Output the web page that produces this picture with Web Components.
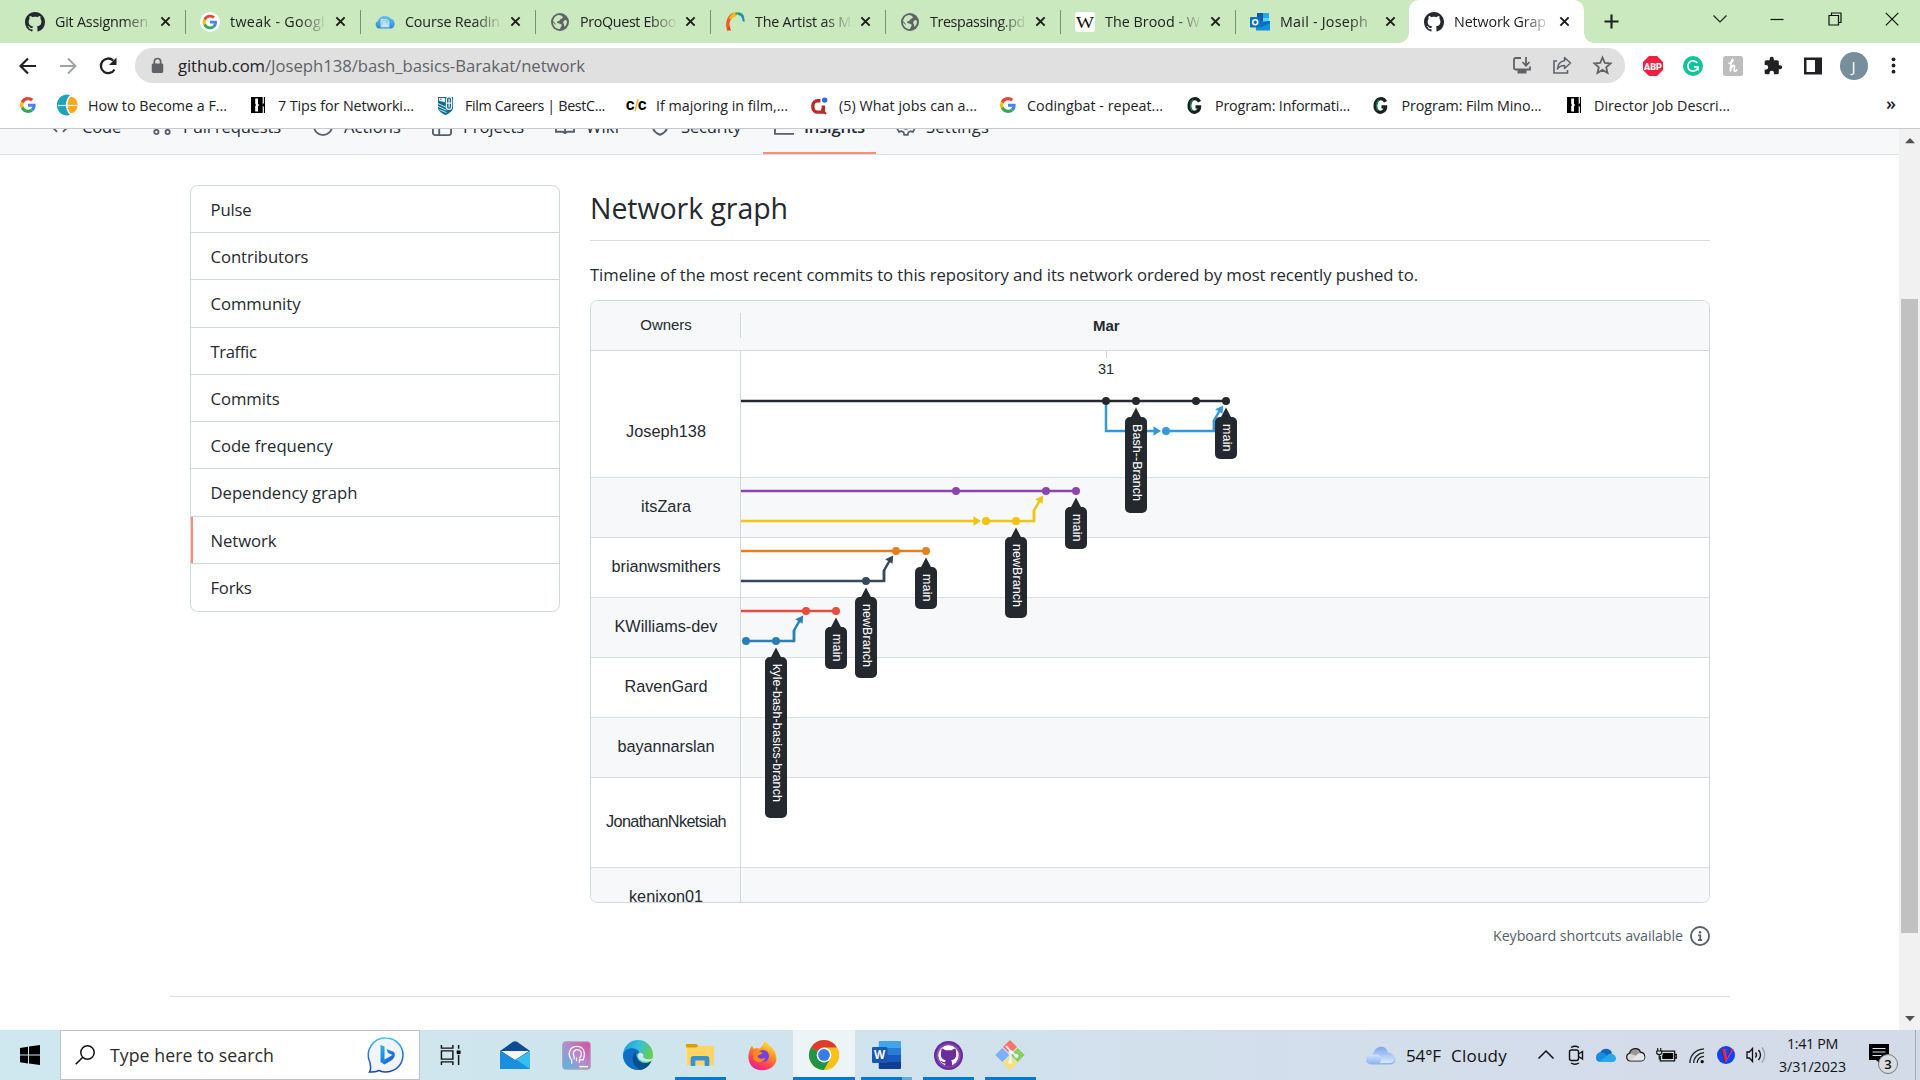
<!DOCTYPE html>
<html lang="en">
<head>
<meta charset="utf-8">
<title>Network Graph</title>
<style>
html,body{margin:0;height:100%;overflow:hidden;background:#fff}
body{font-family:"Open Sans","Noto Sans",sans-serif;color:#24292f}
</style>
</head>
<body>
<desktop-screen></desktop-screen>
<script>
const GH='M8 0c4.42 0 8 3.58 8 8a8.013 8.013 0 0 1-5.45 7.59c-.4.08-.55-.17-.55-.38 0-.27.01-1.13.01-2.2 0-.75-.25-1.23-.54-1.48 1.78-.2 3.65-.88 3.65-3.95 0-.88-.31-1.59-.82-2.15.08-.2.36-1.02-.08-2.12 0 0-.67-.22-2.2.82-.64-.18-1.32-.27-2-.27-.68 0-1.36.09-2 .27-1.53-1.03-2.2-.82-2.2-.82-.44 1.1-.16 1.92-.08 2.12-.51.56-.82 1.28-.82 2.15 0 3.06 1.86 3.75 3.64 3.95-.23.2-.44.55-.51 1.07-.46.21-1.61.55-2.33-.66-.15-.24-.6-.83-1.23-.82-.67.01-.27.38.01.53.34.19.73.9.82 1.13.16.45.68 1.31 2.69.94 0 .67.01 1.3.01 1.49 0 .21-.15.45-.55.38A7.995 7.995 0 0 1 0 8c0-4.42 3.58-8 8-8Z';
const G='<path fill="#ea4335" d="M24 9.5c3.54 0 6.71 1.22 9.21 3.6l6.85-6.85C35.9 2.38 30.47 0 24 0 14.62 0 6.51 5.38 2.56 13.22l7.98 6.19C12.43 13.72 17.74 9.5 24 9.5z"/><path fill="#4285f4" d="M46.98 24.55c0-1.57-.15-3.09-.38-4.55H24v9.02h12.94c-.58 2.96-2.26 5.48-4.78 7.18l7.73 6c4.51-4.18 7.09-10.36 7.09-17.65z"/><path fill="#fbbc05" d="M10.53 28.59c-.48-1.45-.76-2.99-.76-4.59s.27-3.14.76-4.59l-7.98-6.19C.92 16.46 0 20.12 0 24c0 3.88.92 7.54 2.56 10.78l7.97-6.19z"/><path fill="#34a853" d="M24 48c6.48 0 11.93-2.13 15.89-5.81l-7.73-6c-2.15 1.45-4.92 2.3-8.16 2.3-6.26 0-11.57-4.22-13.47-9.91l-7.98 6.19C6.51 42.62 14.62 48 24 48z"/>';
/* name: [viewBox, markup] */
const ICONS={
github:['0 0 16 16',`<path fill="#24292f" d="${GH}"/>`],
google:['0 0 48 48',G],
googleTab:['0 0 20 20',`<circle cx="10" cy="10" r="10" fill="#fff"/><g transform="translate(2.700 2.700) scale(.304)">${G}</g>`],
cloudDoc:['0 0 20 20','<defs><linearGradient id="a" x2="0" y2="1"><stop stop-color="#69c3f2"/><stop offset="1" stop-color="#2d8bd0"/></linearGradient></defs><path fill="url(#a)" d="M4 16.500a4 4 0 0 1-1.200-7.500A7.500 7.500 0 0 1 15.500 6.500 5.300 5.300 0 0 1 16.500 16.500Z"/><path d="M6 7.500h5.500l2.500 2v5.500H6z" fill="#8fd0f2" stroke="#e4f5ff" stroke-width=".7"/><path d="M7.500 9.800h3M7.500 12h5M7.500 13.500h5" stroke="#fff" stroke-width=".8"/>'],
globe:['0 0 20 20','<circle cx="10" cy="10" r="9" fill="#5f6368"/><path fill="#cbe9be" d="M9 3c2 .2 3.500 1 4 2.300-.8 1.600-2.300 1.200-3 2.600-.6 1.400-3 .8-3 2.500 1.200 1.500 3.500.6 4.500 2.200.7 1.400-.9 2.500-1.500 4.400C5.800 17 3 14 3 10.200c1.200.8 1.500 2.300 3 2.600-.6-2.200-2.500-2.600-3-4C4 5.200 6 3.200 9 3zM15 8c1.200-.4 1.600.4 2 1.800-.2 2.200-1 3.800-2.400 5-.8-1.300-.2-2.300-1.200-3.300-.6-1.400.3-2.800 1.600-3.500z"/>'],
arc:['0 0 20 20','<path d="M4 18.500C1 11 4 3.500 10 2.300" fill="none" stroke="#f15b2a" stroke-width="3.500"/><path d="M2.500 16.500l3.600 2.500c-.9-2-1.400-3.500-1.500-5z" fill="#e4312b"/><path d="M5.300 7C6.800 3.700 9 2.500 11.500 2.200" fill="none" stroke="#fbb615" stroke-width="3.300"/><path d="M10.500 1.600c4-.8 7 .8 7.800 4" fill="none" stroke="#35b34a" stroke-width="2.200"/><path d="M13 2c3.500.3 5.500 3 5.700 7.500" fill="none" stroke="#2486d6" stroke-width="2.200"/>'],
wiki:['0 0 20 20','<rect width="20" height="20" rx="3" fill="#fff"/><text x="10" y="16" text-anchor="middle" font-family="Liberation Serif,serif" font-size="17" textLength="18" lengthAdjust="spacingAndGlyphs" fill="#111">W</text>'],
outlook:['0 0 20 20','<path fill="#0f5aa8" d="M7 1h12v9H7z"/><path fill="#28a8ea" d="M13 1h6v5h-6z"/><path fill="#50d9ff" d="M13 6h6v4h-6z"/><path fill="#1490df" d="M6 10l14-1v9.500H6z"/><path fill="#0f6cbd" d="M20 9v2l-8 4-6-4z"/><rect y="5" width="10.500" height="10.500" rx="1" fill="#0a6fcb"/><circle cx="5.200" cy="10.200" r="2.500" fill="none" stroke="#fff" stroke-width="1.500"/>'],
close:['0 0 12 12','<path d="M1.500 1.500l9 9M10.500 1.500l-9 9" stroke="#1b1b1b" stroke-width="2.100"/>'],
plus:['0 0 16 16','<path d="M8 .5v15M.5 8h15" stroke="#202124" stroke-width="2.300"/>'],
chev:['0 0 16 16','<path d="M1.500 4.500L8 11l6.500-6.500" fill="none" stroke="#222" stroke-width="1.200"/>'],
min:['0 0 16 16','<path d="M1.500 8.500h13" stroke="#111" stroke-width="1.200"/>'],
restore:['0 0 16 16','<path d="M2 4.500h9.500V14H2zM4.500 4V2h9.500v9.500h-2" fill="none" stroke="#111" stroke-width="1.200"/>'],
winclose:['0 0 16 16','<path d="M1.800 1.800l12.500 12.500M14.300 1.800L1.800 14.300" stroke="#111" stroke-width="1.200"/>'],
back:['0 0 20 20','<path d="M18 10H3M10 2.500L2.500 10l7.500 7.500" fill="none" stroke="#202124" stroke-width="2.200"/>'],
fwd:['0 0 20 20','<path d="M2 10h15M10 2.500l7.500 7.500-7.500 7.500" fill="none" stroke="#a0a3a6" stroke-width="2"/>'],
reload:['0 0 20 20','<path d="M16.500 13.500a7.300 7.300 0 1 1-1.300-9" fill="none" stroke="#202124" stroke-width="2.300"/><path fill="#202124" d="M18.500 1.500v7.500h-7.500z"/>'],
lock:['0 0 12 16','<path fill="#5f6368" d="M2 6h8a1.300 1.300 0 0 1 1.300 1.300v6.400A1.300 1.300 0 0 1 10 15H2a1.300 1.300 0 0 1-1.300-1.300V7.300A1.300 1.300 0 0 1 2 6z"/><path d="M3.100 6.500V4.300a2.900 2.900 0 0 1 5.800 0v2.200" fill="none" stroke="#5f6368" stroke-width="1.600"/>'],
install:['0 0 20 20','<path d="M9 3H3.500a1.500 1.500 0 0 0-1.500 1.500v8.500a1.500 1.500 0 0 0 1.500 1.500H18v-3" fill="none" stroke="#5f6368" stroke-width="1.800"/><path d="M14 2v8M10.500 7l3.500 3.700L17.500 7" fill="none" stroke="#5f6368" stroke-width="1.800"/><path fill="#5f6368" d="M5.500 15h9v3.500h-9z"/>'],
share:['0 0 20 20','<path d="M5 6H2v12h13.500v-3" fill="none" stroke="#5f6368" stroke-width="1.600"/><path d="M12.500 2.500L18.500 8l-6 5.500V10.500C9 10.500 7 11.500 5.500 14c.2-4.500 2.500-7.600 7-8.200z" fill="none" stroke="#5f6368" stroke-width="1.500" stroke-linejoin="round"/>'],
star:['0 0 20 20','<path d="M10 2.500l2.200 5.100 5.500.5-4.200 3.600 1.300 5.400L10 14.200l-4.800 2.900 1.300-5.400L2.300 8.100l5.500-.5z" fill="none" stroke="#5f6368" stroke-width="1.700"/>'],
abp:['0 0 20 20','<path fill="#ef1f3f" d="M6 0h8l6 6v8l-6 6H6l-6-6V6z"/><text x="10" y="13.500" text-anchor="middle" font-family="Roboto,sans-serif" font-weight="900" font-size="9.500" textLength="18" lengthAdjust="spacingAndGlyphs" fill="#fff">ABP</text>'],
grammarly:['0 0 20 20','<circle cx="10" cy="10" r="10" fill="#15c39a"/><path d="M14.300 7A5.200 5.200 0 1 0 15 11.500M11 11h4.200v3.500" fill="none" stroke="#fff" stroke-width="1.700"/>'],
honey:['0 0 20 20','<rect width="20" height="20" rx="2.500" fill="#bdbdbd"/><path d="M5.500 7.500C8 7 10.500 5 10 3.700 9 2.500 8 6 7.200 15.500 8 11 10.300 8.500 11.300 9.500c1 1-1 4.500 0 5.500.8.700 2-.3 2.800-1.500" fill="none" stroke="#fff" stroke-width="1.700"/>'],
puzzle:['0 0 24 24','<path fill="#202124" d="M20.500 11H19V7a2 2 0 0 0-2-2h-4V3.500a2.500 2.500 0 0 0-5 0V5H4a2 2 0 0 0-2 2v3.800h1.500a2.700 2.700 0 0 1 0 5.400H2V20a2 2 0 0 0 2 2h3.800v-1.500a2.700 2.700 0 0 1 5.400 0V22H17a2 2 0 0 0 2-2v-4h1.500a2.500 2.500 0 0 0 0-5z"/>'],
panel:['0 0 20 20','<path fill="#202124" fill-rule="evenodd" d="M1 1.500h18v17H1zM3.500 4v12h8.500V4z"/>'],
dots:['0 0 20 20','<g fill="#202124"><circle cx="10" cy="3.500" r="2"/><circle cx="10" cy="10" r="2"/><circle cx="10" cy="16.500" r="2"/></g>'],
bmGlobe:['0 0 21 20','<path d="M13 0A10 10 0 0 0 0 10 10 10 0 0 0 13 20C7.500 14 7.500 6 13 0z" fill="#1ba3c0"/><path d="M13.500 1.500C23 3 23 17 13.500 18.500 9.500 13 9.500 7 13.500 1.500z" fill="#fba919"/><path d="M1 10.500h20" stroke="#fff" stroke-width="1.200"/>'],
bmH:['0 0 15 16','<path fill="#000" d="M0 0h15v16H0z"/><path fill="#fff" d="M4.500 1.500H7.500V7L9 8 7.500 9v5.500h-3V9L5.500 8 4.500 7zM12.500 0h1.300v6l-1.300 1.500zM12.500 8.500L13.800 10v6h-1.300z"/>'],
bmFilm:['0 0 16 20','<path fill="#126a8e" d="M0 1h16v11c0 4-4 6-8 8-4-2-8-4-8-8z"/><path fill="#e9f5fa" d="M1 2h6.500v4.500L1 5z"/><path d="M0 8l9 4M0 11l9 4M1.500 14.500l7.500 3" stroke="#d7edf6" stroke-width="1" fill="none"/><rect x="9" y="1" width="5.500" height="13" rx="2.500" fill="none" stroke="#e9f5fa" stroke-width="1.300"/><path d="M11.800 3v9M9 7.500h5.500" stroke="#e9f5fa" stroke-width="1.300"/><circle cx="3" cy="3.500" r=".8" fill="#e0393e"/>'],
bmCC:['0 0 22 14','<text x="0" y="12" font-family="Roboto,sans-serif" font-weight="900" font-size="13.500">C</text><path d="M12.500 1l-3 12" stroke="#f2b430" stroke-width="1.500"/><text x="12.500" y="12" font-family="Roboto,sans-serif" font-weight="900" font-size="13.500">C</text>'],
bmQ:['0 0 18 18','<path d="M10 4H7a5 5 0 0 0-5 5v2a5 5 0 0 0 5 5h6V9" fill="none" stroke="#b92b27" stroke-width="3.600"/><path d="M11 13l5 5" stroke="#b92b27" stroke-width="2"/><circle cx="14.500" cy="3.300" r="2.900" fill="#2e69ff"/>'],
bmG:['0 0 15 18','<path d="M12.500 5C10 0 4 1 2.500 6.500 1 13 5 18 9.500 15.500 12 14 12.500 12 12.500 10.500H8.500" fill="none" stroke="#14231d" stroke-width="3.400"/><path d="M6 3C3 6 3 11 5 14.500" fill="none" stroke="#1c7a57" stroke-width="1.600"/>'],
tri:['0 0 12 8','<path fill="#505050" d="M0 7l6-6 6 6z"/>'],
nCode:['0 0 16 16','<path fill="#57606a" d="m11.280 3.220 4.250 4.250a.75.75 0 0 1 0 1.060l-4.250 4.250a.749.749 0 0 1-1.275-.326.749.749 0 0 1 .215-.734L13.940 8l-3.720-3.720a.75.75 0 0 1 1.060-1.060Zm-6.560 0a.75.75 0 0 1 0 1.060L2.060 8l3.720 3.720a.75.75 0 0 1-1.060 1.060L.47 8.530a.75.75 0 0 1 0-1.060Z"/>'],
nPr:['0 0 16 16','<g fill="none" stroke="#57606a" stroke-width="1.500"><circle cx="3.500" cy="3.250" r="1.700"/><circle cx="3.500" cy="12.750" r="1.700"/><circle cx="12.500" cy="12.750" r="1.700"/><path d="M3.500 5v6M12.500 11V5q0-2-2-2H8"/></g>'],
nPlay:['0 0 16 16','<circle cx="8" cy="8" r="7.250" fill="none" stroke="#57606a" stroke-width="1.500"/>'],
nTable:['0 0 16 16','<path d="M.75 2.500A1.700 1.700 0 0 1 2.500.75h11A1.700 1.700 0 0 1 15.250 2.500v11a1.700 1.700 0 0 1-1.750 1.750h-11A1.700 1.700 0 0 1 .75 13.500zM.75 5.750h14.500M5.750 1v14" fill="none" stroke="#57606a" stroke-width="1.500"/>'],
nBook:['0 0 16 16','<path d="M8 14C7.500 13 6.500 12.600 5.500 12.600H.75V1.750H5.500c1.500 0 2.500 1 2.500 2.500zM8 14c.5-1 1.500-1.400 2.500-1.400h4.750V1.750H10.500C9 1.750 8 2.750 8 4.250z" fill="none" stroke="#57606a" stroke-width="1.500"/>'],
nShield:['0 0 16 16','<path d="M8 .9l6 1.900v4.700c0 3.500-2 6-6 7.500-4-1.500-6-4-6-7.500V2.800z" fill="none" stroke="#57606a" stroke-width="1.500"/>'],
nGraph:['0 0 16 16','<path d="M.75 1v13.250H16M3 10l4-4 2.500 2.500L14 4" fill="none" stroke="#57606a" stroke-width="1.500"/>'],
nGear:['0 0 16 16','<path d="M6.600 1h2.800l.5 2 1.600.9 2-.6 1.400 2.400-1.500 1.400v1.800l1.500 1.400-1.400 2.400-2-.6-1.600.9-.5 2H6.600l-.5-2-1.600-.9-2 .6-1.400-2.400 1.500-1.400V7.100L1.100 5.700l1.400-2.400 2 .6L6.100 3z" fill="none" stroke="#57606a" stroke-width="1.400"/><circle cx="8" cy="8" r="2.300" fill="none" stroke="#57606a" stroke-width="1.400"/>'],
info:['0 0 16 16','<circle cx="8" cy="8" r="7.250" fill="none" stroke="#57606a" stroke-width="1.500"/><circle cx="8" cy="5" r="1" fill="#57606a"/><path d="M6.500 7.500h1.700v3.600M6.400 11.300h3.300" fill="none" stroke="#57606a" stroke-width="1.400"/>'],
win:['0 0 20 20','<path d="M0 3l8-1.200v7.800H0zM9 1.600L20 0v9.600H9zM0 10.600h8v7.800L0 17.200zM9 10.600h11V20L9 18.400z"/>'],
mag:['0 0 20 20','<circle cx="12.500" cy="7.500" r="6.700" fill="none" stroke="#111" stroke-width="1.500"/><path d="M7.800 12.200L.7 19.300" stroke="#111" stroke-width="1.600"/>'],
bing:['0 0 36 36','<defs><linearGradient id="a" x2="0" y2="1"><stop stop-color="#35c6ef"/><stop offset=".5" stop-color="#2272e0"/><stop offset="1" stop-color="#1746b8"/></linearGradient><linearGradient id="b" x2="1" y2="1"><stop stop-color="#1fb5f0"/><stop offset="1" stop-color="#1b50d8"/></linearGradient></defs><path d="M18 1a17 17 0 1 1-7 32.500c-3 1.300-6 1.800-9.500 1.500 1.500-2 1.300-6 .3-10A17 17 0 0 1 18 1z" fill="#f1f5fb" stroke="url(#a)" stroke-width="1.500"/><path fill="url(#b)" d="M12.500 8l4 1.500v13l8-4.500-4.500-2-1.500-4 7.500 3c2 3 0 6.500-2 8l-7.500 4.500-4-2.500z"/>'],
taskview:['0 0 22 22','<path d="M1.500 0v3.500h12V0M1.500 22v-3.500h12V22M1.500 6.500h12v9h-12zM19.500 0v4M19.500 11v11" fill="none" stroke="#111" stroke-width="1.500"/><path d="M17.500 6h4v4h-4z"/>'],
mail:['0 0 30 28','<path fill="#0b4c94" d="M0 10L13 .8q2-1.300 4 0L30 10v3L15 20 0 13z"/><path fill="#f4f6f8" d="M1 10h28l-14 9z"/><path fill="#1a8fe0" d="M0 10l15 9 15-9v18H0z"/><path fill="#38bdf0" d="M30 10v18L16 18.500z"/>'],
msi:['0 0 30 30','<defs><linearGradient id="a" x1="0" y1="1" x2="1" y2="0"><stop stop-color="#41bfe3"/><stop offset=".5" stop-color="#b58bd0"/><stop offset="1" stop-color="#ea3f9a"/></linearGradient></defs><rect x=".8" y=".8" width="28.400" height="28.400" rx="3" fill="url(#a)" stroke="#a9a3b8" stroke-width="1.300"/><path d="M10 23.500v-4c-5-6-2-14 5.500-14 7 0 8 6 7.500 10l-1 4H18v3M12.500 19v-3c-2-4 0-7 3.500-7s5 4 3.500 7l-1.500 2M15 21v-4" fill="none" stroke="#fff" stroke-width="1.300"/><path d="M18 26.500h9" stroke="#fff" stroke-width="1.600"/>'],
edge:['0 0 30 30','<defs><linearGradient id="a" x1="0" x2="1" y2=".3"><stop stop-color="#1b9de2"/><stop offset=".55" stop-color="#35c1d8"/><stop offset="1" stop-color="#66cf4b"/></linearGradient></defs><circle cx="15" cy="15" r="15" fill="url(#a)"/><path fill="#0f6fc6" d="M0 15c1-5 6-7.500 11-6.500 4 .8 6 3.500 5 5-4-1-6 7 1 9.500 4 1.500 8 0 11-1.500C25.500 27.500 20 30 15 30 6.500 30 0 23 0 15z"/><path fill="#0c4c91" d="M13 12c-5 3-5 13 4 17.800 5-.6 9-3.800 11-8.300-6 3.500-15 1.500-15-9.500z"/><path fill="#d0e6ee" d="M15.500 13.500c-1.500 2-.5 7 5.500 8 4 .6 7 0 9.500-2.500V18c-2 1-4 1.500-7 1-3-.5-4-2-3-4-1-2.500-3.500-3-5-1.500z"/>'],
explorer:['0 0 30 26','<path fill="#dc9e08" d="M0 1h11l3 3v4H0z"/><path fill="#fed464" d="M0 5h11l3-2h16v21H0z"/><path fill="#3592d6" d="M5 25V17q0-3 3-3h14q3 0 3 3v8h-5v-6H10v6z"/><path fill="#ffe39a" d="M0 5h1v19H0z"/>'],
firefox:['0 0 30 30','<defs><linearGradient id="a" x1=".8" y1="0" x2=".3" y2="1"><stop stop-color="#fff04a"/><stop offset=".4" stop-color="#ff9622"/><stop offset=".75" stop-color="#ff3f56"/><stop offset="1" stop-color="#e11ea1"/></linearGradient></defs><path fill="url(#a)" d="M4 5l2 3c3-1 4-1 6 0 2-3 4-3 5-8 4 2 4 5 7 6 6 6 7 14 3 19-6 7-19 7-24 0C-1 19 0 11 4 5z"/><circle cx="15.500" cy="15.500" r="6.300" fill="#7540dc"/><path fill="#ff8a20" d="M6 11c4-2 6 0 9 1-1 3-5 2-5 4 1 3 6 3 8 1-2 7-11 6-13 0z"/>'],
chrome:['0 0 30 30','<circle cx="15" cy="15" r="15" fill="#fbc116"/><path fill="#dd3b2b" d="M15 15L2 7.500A15 15 0 0 1 28 7.500z"/><path fill="#1f9445" d="M15 15L2 7.500A15 15 0 0 0 15 30l6.500-11.500z"/><path fill="#fbc116" d="M15 7.500h13A15 15 0 0 1 15 30l6.500-11z"/><circle cx="15" cy="15" r="7.400" fill="#fff"/><circle cx="15" cy="15" r="5.900" fill="#367ee6"/>'],
word:['0 0 30 28','<path fill="#41a5ee" d="M7 1q0-1 1-1h21q1 0 1 1v6H7z"/><path fill="#2b7cd3" d="M7 7h23v7H7z"/><path fill="#185abd" d="M7 14h23v7H7z"/><path fill="#103f91" d="M7 21h23v6q0 1-1 1H8q-1 0-1-1z"/><rect y="6" width="16" height="16" rx="1.300" fill="#1a56b4"/><text x="8" y="18.300" text-anchor="middle" font-family="Open Sans,sans-serif" font-weight="700" font-size="12" fill="#fff">W</text>'],
ghd:['0 0 30 30',`<circle cx="15" cy="15" r="15" fill="#6c2d9b"/><circle cx="15" cy="15" r="12.500" fill="#8a4ab5"/><circle cx="15" cy="15" r="10.500" fill="#fff"/><path fill="#6c2d9b" d="M8 7.500l4 2h6l4-2c1 2 .7 3.500.8 5 .8 4.500-1.500 7-5 7.500 1 1 .8 3 .8 6h-7V23c-3 .8-3.600-1-5-2.500 2 0 2 1.800 5 1 0-.6.200-1 .8-1.500-3.600-.5-6-3-5.200-7.500z"/>`],
git:['0 0 30 30','<path fill="#f8736c" d="M15 0l7 7-7 7-7-7z"/><path fill="#7cb0fb" d="M7.300 8l7 7-7 7-7-7z"/><path fill="#87ce5a" d="M22.700 8l7 7-7 7-7-7z"/><path fill="#fbdf70" d="M15 16l7 7-7 7-7-7z"/><path d="M11 6l4.500 5v12M16 11l5 5" stroke="#eef6f5" stroke-width="1.800" fill="none"/><circle cx="15.500" cy="12" r="2" fill="#eef6f5"/><circle cx="21.500" cy="16" r="2" fill="#eef6f5"/><circle cx="15" cy="22" r="2" fill="#eef6f5"/>'],
weather:['0 0 30 20','<defs><linearGradient id="a" x2="0" y2="1"><stop stop-color="#7aa7ee"/><stop offset="1" stop-color="#dbe9fd"/></linearGradient><linearGradient id="b" x2="0" y2="1"><stop stop-color="#d7e6fd"/><stop offset="1" stop-color="#8ab0f0"/></linearGradient></defs><path fill="url(#a)" d="M6 18a6 6 0 0 1 1-9C9-1 20-2 22 7c9 0 9 11 2 11z"/><path fill="url(#b)" d="M6 19.500a5.500 5.500 0 1 1 2.500-10q3-2 6 1.500c1 3 .5 6-1 7h10a5 5 0 0 0 0-10c8 0 8 11.500 1 11.500z"/>'],
up:['0 0 18 18','<path d="M1.500 12.500L9 5l7.500 7.500" fill="none" stroke="#111" stroke-width="1.500"/>'],
meet:['0 0 18 20','<g fill="none" stroke="#111" stroke-width="1.400"><rect x="2.500" y="5" width="9" height="10.500" rx="2"/><path d="M11.500 9l4-2.500v7.500l-4-2.500M4 2.500q4-2.500 8 0M4 18q4 2.500 8 0"/></g>'],
onedrive:['0 0 20 15',`<path fill="#0f66ba" d="M4 12A6 6 0 0 1 5 3.500C7 0 14-.5 16 5l-4 7z"/><path fill="#1490df" d="M0 10.500A5 5 0 0 1 7 5l9 6-12 4A4.500 4.500 0 0 1 0 10.500z"/><path fill="#28a8ea" d="M3.500 14.500L13 6.500a5 5 0 0 1 7 4.500 4 4 0 0 1-4 4H4z"/>`],
grayCloud:['0 0 20 16','<path fill="#9a9a9a" stroke="#111" stroke-width="1.200" d="M4.500 14A4 4 0 0 1 3.500 6.200C5 .5 13 .2 14.500 5.200A4.500 4.500 0 0 1 15.500 14z"/><path fill="#e8e8e8" d="M4 13.400l8.500-7c3.500-1 6 1 6 4a3.200 3.200 0 0 1-3.300 3z"/><path fill="#d8d8d8" d="M1.500 10c0-2.500 2.500-4 5-2.500l3.500 1.300-5.500 4.600C2.500 13.300 1.500 12 1.500 10z"/>'],
battery:['0 0 22 16','<path d="M6 4.200h13.500v9.600H4.500V9M20 7.500h1.300v3.500H20" fill="none" stroke="#111" stroke-width="1.300"/><path d="M7.500 6h10.500v6H6.500V9z"/><path d="M1.800 1v2.500M5 1v2.500M.8 4h5.200v2.500q-2.600 2.500-5.200 0zM3.400 7.500v5" stroke="#111" stroke-width="1.200" fill="none"/>'],
wifi:['0 0 18 18','<g fill="none" stroke="#222" stroke-width="1.400"><path d="M2 17C2 9 8 2.500 17 2"/><path d="M6 17C6 11 10.500 6.500 17 6"/><path d="M9.700 17c0-4 3-7 7.300-7"/></g><circle cx="15" cy="15.500" r="1.700"/>'],
vicon:['0 0 18 18','<circle cx="9" cy="9" r="9" fill="#0b45f2"/><text x="9" y="15.500" text-anchor="middle" font-family="Liberation Serif,serif" font-style="italic" font-weight="700" font-size="19" fill="#ef1d3a">V</text>'],
speaker:['0 0 20 18','<path d="M1 6h2.500L6.500 2.500v13L3.500 12H1z" fill="none" stroke="#111" stroke-width="1.300"/><path d="M9.500 6.500q2 2.500 0 5M12.500 4q4 5 0 10" fill="none" stroke="#111" stroke-width="1.300"/><path d="M16 1.500q5.500 7.500 0 15" fill="none" stroke="#96a0ae" stroke-width="1.300"/>'],
note:['0 0 20 20','<path d="M0 0h20v16h-8.500v4L7 16H0z"/><path d="M3.500 4.500h13M3.500 8h13M3.500 11.500h9" stroke="#dbe0ec" stroke-width="1.200"/>']
};
const define=(name,render,after)=>customElements.define(name,class extends HTMLElement{
  connectedCallback(){
    if(this.shadowRoot)return;
    const t=document.createElement('template');
    t.innerHTML=render(this);
    this.attachShadow({mode:'open'}).appendChild(t.content.cloneNode(true));
    if(after)after(this);
  }
});
const a=(e,n,d)=>e.getAttribute(n)??d;

define('app-icon',e=>{const [vb,m]=ICONS[a(e,'name')];
 return `<style>:host{display:block;flex:none;width:${a(e,'w',20)}px;height:${a(e,'h',a(e,'w',20))}px}svg{display:block;width:100%;height:100%;overflow:visible}</style><svg viewBox="${vb}" preserveAspectRatio="none">${m}</svg>`});

/* One line of text spread over a given width */
define('fit-text',e=>`<style>:host{display:block;flex:none;width:${a(e,'w')}px;white-space:nowrap}span{display:inline-block}</style><span><slot></slot></span>`,
 e=>{const s=e.shadowRoot.querySelector('span'),n=e.textContent.length,r=s.getBoundingClientRect().width;
  if(r)s.style.letterSpacing=((+a(e,'w')-r)/n).toFixed(3)+'px';});

define('browser-tab',e=>`<style>
:host{display:flex;align-items:center;box-sizing:border-box;width:175px;height:43px;flex:none;padding-left:15px;position:relative;font-size:14.3px;color:#202124}
:host([line])::after{content:"";position:absolute;right:-1px;top:10px;height:24px;width:1px;background:#7c8f75}
:host([active]){background:#fff;border-radius:10px 10px 0 0}
:host([active])::before,:host([active])::after{content:"";position:absolute;bottom:0;width:10px;height:10px}
:host([active])::before{left:-10px;background:radial-gradient(circle at 0 0,transparent 9.5px,#fff 10px)}
:host([active])::after{right:-10px;background:radial-gradient(circle at 100% 0,transparent 9.5px,#fff 10px)}
div{width:96px;margin:0 9px 0 10px;overflow:hidden;-webkit-mask:linear-gradient(90deg,#000 72%,transparent 102%);mask:linear-gradient(90deg,#000 72%,transparent 102%)}
</style><app-icon name="${a(e,'icon')}" w="20"></app-icon><div><fit-text w="${a(e,'w')}">${a(e,'label')}</fit-text></div><app-icon name="close" w="11"></app-icon>`);

define('tab-strip',()=>`<style>
:host{display:flex;height:43px;background:#cbe9be;padding-left:10px}
browser-tab[active]{margin-left:-1px}
.ctl{display:flex;align-items:center;gap:41.500px;margin-left:93px;height:37px}
app-icon.p{align-self:center;margin-left:19.500px}
</style>
${[['github','Git Assignmen',93],['googleTab','tweak - Googl',95],['cloudDoc','Course Readin',95],['globe','ProQuest Eboo',96],['arc','The Artist as M',96],['globe','Trespassing.pd',95],['wiki','The Brood - W',95],['outlook','Mail - Joseph',88]].map((t,i)=>`<browser-tab ${i<7?'line':''} icon="${t[0]}" label="${t[1]}" w="${t[2]}"></browser-tab>`).join('')}
<browser-tab active icon="github" label="Network Grap" w="92"></browser-tab>
<app-icon class="p" name="plus" w="15"></app-icon>
<div class="ctl"><app-icon name="chev" w="16"></app-icon><app-icon name="min" w="16"></app-icon><app-icon name="restore" w="16"></app-icon><app-icon name="winclose" w="16"></app-icon></div>`);

define('tool-bar',()=>`<style>
:host{display:flex;align-items:center;height:45px;background:#fff;padding-left:17.500px;box-sizing:border-box}
.nav{display:flex;gap:20px}
.pill{display:flex;align-items:center;box-sizing:border-box;width:1490px;height:35px;margin-left:17.500px;border-radius:18px;background:#e0e0e0;padding:0 12px 0 16px;font-size:16.700px;color:#5f6368}
.pill>app-icon{margin-right:14px}
.host{color:#202124}.end{margin-left:auto;display:flex;gap:20px}
.ext{display:flex;align-items:center;gap:20px;margin-left:17.500px}
.av{width:28px;height:28px;border-radius:50%;background:#768f9a;color:#fff;font:15px "Open Sans",sans-serif;display:flex;align-items:center;justify-content:center;margin:0 -4px 0 -3px}
</style>
<div class="nav"><app-icon name="back"></app-icon><app-icon name="fwd"></app-icon><app-icon name="reload"></app-icon></div>
<div class="pill"><app-icon name="lock" w="13" h="17"></app-icon><fit-text class="host" w="87">github.com</fit-text><fit-text w="320">/Joseph138/bash_basics-Barakat/network</fit-text>
<div class="end"><app-icon name="install"></app-icon><app-icon name="share"></app-icon><app-icon name="star" w="21"></app-icon></div></div>
<div class="ext"><app-icon name="abp"></app-icon><app-icon name="grammarly"></app-icon><app-icon name="honey"></app-icon><app-icon name="puzzle"></app-icon><app-icon name="panel"></app-icon><div class="av">J</div><app-icon name="dots" w="19"></app-icon></div>`);

define('bookmark-bar',()=>{
 const b=[[20,'google',16,0,0,''],[57,'bmGlobe',21,31,139,'How to Become a F...'],[251,'bmH',14,27,136,'7 Tips for Networki...'],[438,'bmFilm',15,27,140,'Film Careers | BestC...'],[626,'bmCC',21,30,132,'If majoring in film,...'],[811,'bmQ',17,28,138,'(5) What jobs can a...'],[1000,'google',16,27,136,'Codingbat - repeat...'],[1187,'bmG',15,28,135,'Program: Informati...'],[1373,'bmG',15,28.5,140,'Program: Film Mino...'],[1567,'bmH',14,27,136,'Director Job Descri...']];
 const hh={google:16,bmGlobe:20,bmH:16,bmFilm:19,bmCC:14,bmQ:17,bmG:17};
 return `<style>:host{display:flex;align-items:center;box-sizing:border-box;height:41px;padding:0 0 6px 20px;background:#fff;border-bottom:1px solid #c6c9cd;font-size:14.300px;color:#202124}
 .b{display:flex;align-items:center;flex:none}.more{font-size:18px;line-height:20px;margin:-4px 0 0 9px;font-weight:600}</style>`+
 b.map((x,i)=>`<div class="b" style="width:${(b[i+1]?.[0]??1877)-x[0]}px"><app-icon name="${x[1]}" w="${x[2]}" h="${hh[x[1]]}" style="margin-right:${Math.max(0,x[3]-x[2])}px"></app-icon>${x[5]?`<fit-text w="${x[4]}">${x[5]}</fit-text>`:''}</div>`).join('')+'<div class="more">»</div>'});

define('repo-nav',()=>{
 const n=[[50,'nCode','Code',82,39],[152,'nPr','Pull requests',183,98],[313,'nPlay','Actions',344,57],[432,'nTable','Projects',463,61],[555,'nBook','Wiki',586,33],[650,'nShield','Security',681,60],[774,'nGraph','Insights',804,61],[896,'nGear','Settings',926,63]];
 return `<style>:host{display:flex;align-items:flex-end;height:25px;overflow:hidden;background:#f6f8fa;border-bottom:1px solid #d8dee4;padding-left:50px}
 .i{display:flex;align-items:center;height:56px;box-sizing:border-box;flex:none;font-size:16.600px;color:#24292f;position:relative}
 .on{font-weight:600}.on::after{content:"";position:absolute;left:-11px;width:113px;bottom:0;height:2.500px;background:#fd8c73}
 </style>`+n.map((x,i)=>`<div class="i ${x[2]=='Insights'?'on':''}" style="width:${(n[i+1]?.[0]??1000)-x[0]}px"><app-icon name="${x[1]}" style="margin-right:${x[3]-x[0]-20}px"></app-icon><fit-text w="${x[4]}">${x[2]}</fit-text></div>`).join('')});

define('side-menu',()=>{
 const m=[['Pulse',41,47],['Contributors',98,47],['Community',90,48],['Traffic',46,47],['Commits',69,47],['Code frequency',122,47],['Dependency graph',147,48],['Network',66,47],['Forks',41,47]];
 return `<style>:host{display:block;align-self:flex-start;box-sizing:border-box;width:370px;border:1px solid #d0d7de;border-radius:7.500px;overflow:hidden;flex:none;font-size:16.700px}
 div{display:flex;align-items:center;box-sizing:border-box;border-bottom:1px solid #d0d7de;padding-left:19.500px}div:last-child{border:0}
 .on{box-shadow:inset 2px 0 #fd8c73}</style>`+m.map(x=>`<div class="${x[0]=='Network'?'on':''}" style="height:${x[2]}px"><fit-text w="${x[1]}">${x[0]}</fit-text></div>`).join('')});

define('network-graph',()=>{
 const rows=[['Joseph138',126,80],['itsZara',60,50],['brianwsmithers',60,109],['KWilliams-dev',60,103],['RavenGard',60,83],['bayannarslan',60,97],['JonathanNketsiah',90,120],['kenixon01',60,74]];
 /* the drawing's origin is the lower left corner of the header */
 const X=x=>x-741,Y=y=>y-351;
 const line=(c,...p)=>`<polyline points="${p.map(q=>X(q[0])+','+Y(q[1])).join(' ')}" fill="none" stroke="${c}" stroke-width="2.500"/>`;
 const dot=(c,y,...xs)=>xs.map(x=>`<circle cx="${X(x)}" cy="${Y(y)}" r="4" fill="${c}"/>`).join('');
 const right=(c,x,y)=>`<path fill="${c}" d="M${X(x)} ${Y(y)}l-7.500-4.700v9.400z"/>`;
 const merge=(c,x,y)=>line(c,[x-12,y+30],[x-12,y+19.500],[x-6,y+9])+`<path fill="${c}" d="M${X(x-2.800)} ${Y(y+4.500)}l-8 3.700 7.300 4.600z"/>`;
 const tag=(x,y,h,w,t)=>`<g transform="translate(${X(x)} ${Y(y)})"><path fill="#24292f" d="M0 6.500L5.500 17h-11z"/><rect x="-11" y="16" width="22" height="${h}" rx="5" fill="#24292f"/><text transform="translate(-3.200 23) rotate(90)" textLength="${w}" fill="#fff">${t}</text></g>`;
 const k='#24292f',b='#3498db',p='#8e44ad',y='#f1c40f',o='#e67e22',d='#34495e',r='#e74c3c',u='#2980b9';
 return `<style>:host{display:flex;flex-direction:column;box-sizing:border-box;width:1120px;height:603px;border:1px solid #d0d7de;border-radius:7.500px;overflow:hidden;font-family:"Liberation Sans",Arial,sans-serif}
 header{display:flex;flex:none;align-items:center;height:49px;background:#f6f8fa;border-bottom:1px solid #d0d7de;font-size:15px}
 .ow{width:148px;height:23px;display:flex;align-items:center;justify-content:center;border-right:1px solid #d0d7de;padding:0 0 2px 1px}
 .mo{font-weight:700;margin-left:352px}
 main{display:flex;position:relative;flex:1;overflow:hidden}
 .names{width:149px;flex:none;border-right:1px solid #d0d7de}
 .rows{flex:1}
 .row{box-sizing:border-box;border-bottom:1px solid #d8dee4;display:flex;align-items:center;justify-content:center;font-size:16.250px}
 .names .row{padding:0 0 2px 1px}
 .row:nth-of-type(even){background:#f6f8fa}
 .names .first{padding-top:34px;padding-bottom:0}
 svg{position:absolute;left:150px;top:0;width:968px;height:551px;font-size:12.500px}
 </style>
 <header><div class="ow"><fit-text w="51.500">Owners</fit-text></div><div class="mo">Mar</div></header>
 <main><div class="names">${rows.map((q,i)=>`<div class="row ${i?'':'first'}" style="height:${q[1]+(i?0:1)}px"><fit-text w="${q[2]}">${q[0]}</fit-text></div>`).join('')}</div>
 <div class="rows">${rows.map((q,i)=>`<div class="row" style="height:${q[1]+(i?0:1)}px"></div>`).join('')}</div>
 <svg><path d="M365.500 0v7" stroke="#d0d7de"/><text x="365" y="22.500" text-anchor="middle" font-size="14.500" fill="#24292f">31</text>
 ${line(k,[741,401],[1226,401])}${dot(k,401,1106,1136,1196,1226)}
 ${line(b,[1106,405],[1106,431],[1155,431])}${right(b,1161,431)}${dot(b,431,1166)}${line(b,[1166,431],[1214,431],[1214,420])}${merge(b,1226,401)}
 ${line(p,[741,491],[1076,491])}${dot(p,491,956,1046,1076)}
 ${line(y,[741,521],[975,521])}${right(y,981,521)}${line(y,[986,521],[1034,521],[1034,510])}${dot(y,521,986,1016)}${merge(y,1046,491)}
 ${line(o,[741,551],[926,551])}${dot(o,551,896,926)}
 ${line(d,[741,581],[884,581],[884,570])}${dot(d,581,866)}${merge(d,896,551)}
 ${line(r,[741,611],[836,611])}${dot(r,611,806,836)}
 ${line(u,[746,641],[794,641],[794,630])}${dot(u,641,746,776)}${merge(u,806,611)}
 ${tag(1136,401,96,77,'Bash--Branch')}${tag(1226,401,42,27.500,'main')}${tag(1076,491,42,27.500,'main')}${tag(1016,521,81,63,'newBranch')}${tag(926,551,42,27.500,'main')}${tag(866,581,81,63,'newBranch')}${tag(836,611,42,27.500,'main')}${tag(776,641,161,138,'kyle-bash-basics-branch')}
 </svg></main>`});

define('page-scrollbar',()=>`<style>:host{display:flex;flex-direction:column;align-items:center;justify-content:space-between;box-sizing:border-box;width:21px;background:#f1f1f1;padding:8px 0;flex:none}
 .t{width:17px;height:634px;background:#c1c1c1;margin:155px 0 auto}.d{transform:scaleY(-1)}</style><app-icon name="tri" w="10" h="7"></app-icon><div class="t"></div><app-icon class="d" name="tri" w="10" h="7"></app-icon>`);

define('repo-page',()=>`<style>:host{display:flex;height:901px;background:#fff}
 .doc{flex:1;display:flex;flex-direction:column}
 .cols{display:flex;gap:30px;margin:30px 0 0 190px}
 h1{margin:0;font-size:28.500px;font-weight:400;height:55px;line-height:47px;border-bottom:1px solid #d8dee4}
 .desc{font-size:16.700px;line-height:26px;margin:21px 0 12px}
 .kb{display:flex;align-items:center;justify-content:flex-end;gap:7px;font-size:14.300px;color:#57606a;height:24px;margin-top:21px}
 .kb fit-text{padding-bottom:2px}
 .foot{width:1560px;margin:48px 0 0 170px;height:1px;background:#d8dee4}
 </style><div class="doc"><repo-nav></repo-nav><div class="cols"><side-menu></side-menu><section><h1><fit-text w="198">Network graph</fit-text></h1><div class="desc"><fit-text w="828">Timeline of the most recent commits to this repository and its network ordered by most recently pushed to.</fit-text></div><network-graph></network-graph><div class="kb"><fit-text w="190">Keyboard shortcuts available</fit-text><app-icon name="info"></app-icon></div></section></div><div class="foot"></div></div><page-scrollbar></page-scrollbar>`);

define('task-bar',()=>`<style>:host{display:flex;height:50px;background:linear-gradient(90deg,#cfe7ee 0,#cfe5ee 35%,#d2e0ec 60%,#d4dcea 85%,#d3dbe9 100%);color:#111}
 .start{width:60px;display:flex;align-items:center;justify-content:center}
 .search{display:flex;align-items:center;box-sizing:border-box;width:360px;border:1px solid #bfc3c5;background:#fff;padding:0 15px 0 14px;font-size:17.700px;color:#2b2b2b}
 .search fit-text{margin:0 auto 0 15px}
 .app{width:62px;display:flex;align-items:center;justify-content:center;position:relative;flex:none}
 .run::after{content:"";position:absolute;left:6px;width:51px;bottom:0;height:3px;background:#0078d7}
 .act{background:#ecf4f7;box-sizing:border-box}.act::after{left:0;width:62px}
 .multi::after{background:linear-gradient(90deg,#0078d7 41px,#64a9e2 41px)}
 .wx{display:flex;align-items:center;margin-left:325px;gap:10px;font-size:17px}
 .tray{display:flex;align-items:center;margin-left:24px}.tray div{width:30px;display:flex;justify-content:center}
 .clk{width:85px;display:flex;flex-direction:column;align-items:center;justify-content:center;font-size:14.300px;line-height:23px;padding-bottom:1px;margin-left:-1px}
 .nt{display:flex;align-items:center;margin-left:14px;position:relative;padding-bottom:2px;width:46px;border-right:1px solid #a2abb8}
 .nt b{position:absolute;left:9px;top:23.500px;width:18px;height:18px;border:1px solid #777;border-radius:50%;background:#d8dbe0;font:600 13px/18px "Open Sans",sans-serif;text-align:center}
 </style>
 <div class="start"><app-icon name="win"></app-icon></div>
 <div class="search"><app-icon name="mag"></app-icon><fit-text w="164">Type here to search</fit-text><app-icon name="bing" w="36"></app-icon></div>
 <div class="app"><app-icon name="taskview" w="21" h="20" style="margin-right:2px"></app-icon></div><div class="app" style="padding-left:1px;margin-right:-1px;left:1px"><app-icon name="mail" w="30" h="28"></app-icon></div><div class="app" style="padding-left:1px"><app-icon name="msi" w="29"></app-icon></div><div class="app"><app-icon name="edge" w="30"></app-icon></div>
 <div class="app run"><app-icon name="explorer" w="28" h="24"></app-icon></div><div class="app"><app-icon name="firefox" w="29"></app-icon></div><div class="app run act"><app-icon name="chrome" w="30"></app-icon></div><div class="app run multi"><app-icon name="word" w="29" h="28"></app-icon></div><div class="app run"><app-icon name="ghd" w="29"></app-icon></div><div class="app run"><app-icon name="git" w="30"></app-icon></div>
 <div class="wx"><app-icon name="weather" w="30" h="19"></app-icon><fit-text w="35">54°F</fit-text><fit-text w="56">Cloudy</fit-text></div>
 <div class="tray">${[['up',18,18],['meet',18,20],['onedrive',20,14],['grayCloud',20,16],['battery',21,16],['wifi',17,17],['vicon',18,18],['speaker',20,18]].map(t=>`<div><app-icon name="${t[0]}" w="${t[1]}" h="${t[2]}"></app-icon></div>`).join('')}</div>
 <div class="clk"><fit-text w="51">1:41 PM</fit-text><fit-text w="67">3/31/2023</fit-text></div>
 <div class="nt"><app-icon name="note" w="20"></app-icon><b>3</b></div>`);

define('desktop-screen',()=>`<style>:host{display:flex;flex-direction:column;width:1920px;height:1080px;overflow:hidden}:host>*{flex:none}</style>
<tab-strip></tab-strip><tool-bar></tool-bar><bookmark-bar></bookmark-bar><repo-page></repo-page><task-bar></task-bar>`);
</script>
</body>
</html>
